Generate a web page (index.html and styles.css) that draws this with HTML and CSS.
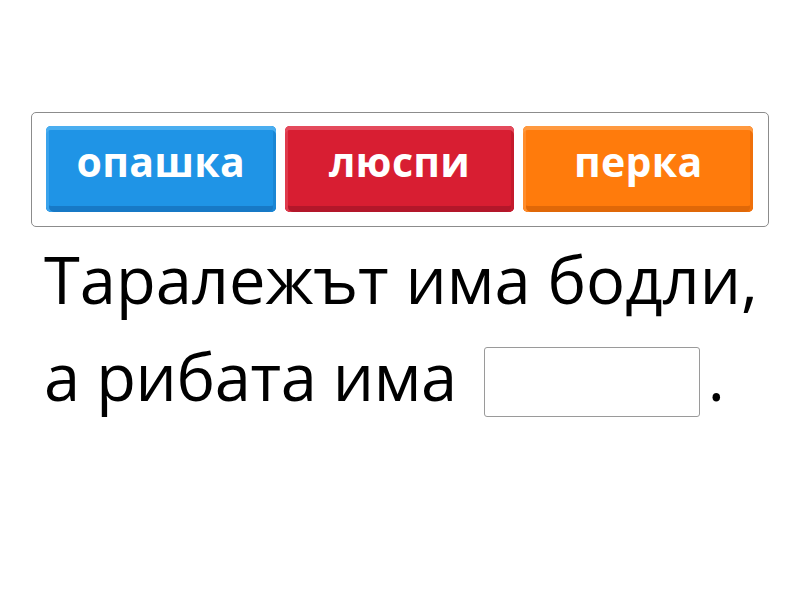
FILE: index.html
```html
<!DOCTYPE html>
<html lang="bg">
<head>
<meta charset="utf-8">
<link rel="stylesheet" href="styles.css">
</head>
<body>
<div class="page">
  <div class="bank">
    <div class="tile tile-blue">опашка</div>
    <div class="tile tile-red">люспи</div>
    <div class="tile tile-orange">перка</div>
  </div>
  <p class="sentence">Таралежът има бодли,<br><span class="line2">а рибата има</span> <span class="blank"></span>.</p>
</div>
</body>
</html>
```

FILE: styles.css
```css
html, body {
  margin: 0;
  padding: 0;
  background: #ffffff;
}
.page {
  padding: 112px 31px 0 31px;
  font-family: "Open Sans", "Liberation Sans", sans-serif;
}
.bank {
  display: flex;
  gap: 9px;
  padding: 13px 15px 14px 14px;
  border: 1px solid #8c8c8c;
  border-radius: 5px;
  height: 86px;
}
.tile {
  flex: 1;
  display: flex;
  align-items: center;
  justify-content: center;
  border-radius: 5px;
  color: #ffffff;
  font-weight: 700;
  font-size: 41px;
  letter-spacing: 0.3px;
  padding-bottom: 16px;
  box-sizing: border-box;
}
.tile-blue {
  background: #1f94e6;
  box-shadow: inset 0 4px 0 #4aaef0, inset 3px 0 0 #3aa3ec, inset -3px 0 0 #1a86d4, inset 0 -6px 0 #1779c6;
}
.tile-red {
  background: #d81e32;
  box-shadow: inset 0 4px 0 #e44a5c, inset 3px 0 0 #df3a4c, inset -3px 0 0 #c51a2c, inset 0 -6px 0 #b3172a;
}
.tile-orange {
  background: #ff7b0c;
  box-shadow: inset 0 4px 0 #ff993f, inset 3px 0 0 #ff8c2a, inset -3px 0 0 #ef700a, inset 0 -6px 0 #e06808;
}
.sentence {
  margin: 4px 0 0 13px;
  font-size: 65px;
  line-height: 97px;
  color: #000000;
  font-weight: 400;
}
.line2 {
  letter-spacing: -0.4px;
}
.blank {
  display: inline-block;
  width: 214px;
  height: 68px;
  border: 1px solid #9a9a9a;
  border-radius: 3px;
  margin-left: 10px;
  margin-right: 8px;
  vertical-align: -16px;
}
```
